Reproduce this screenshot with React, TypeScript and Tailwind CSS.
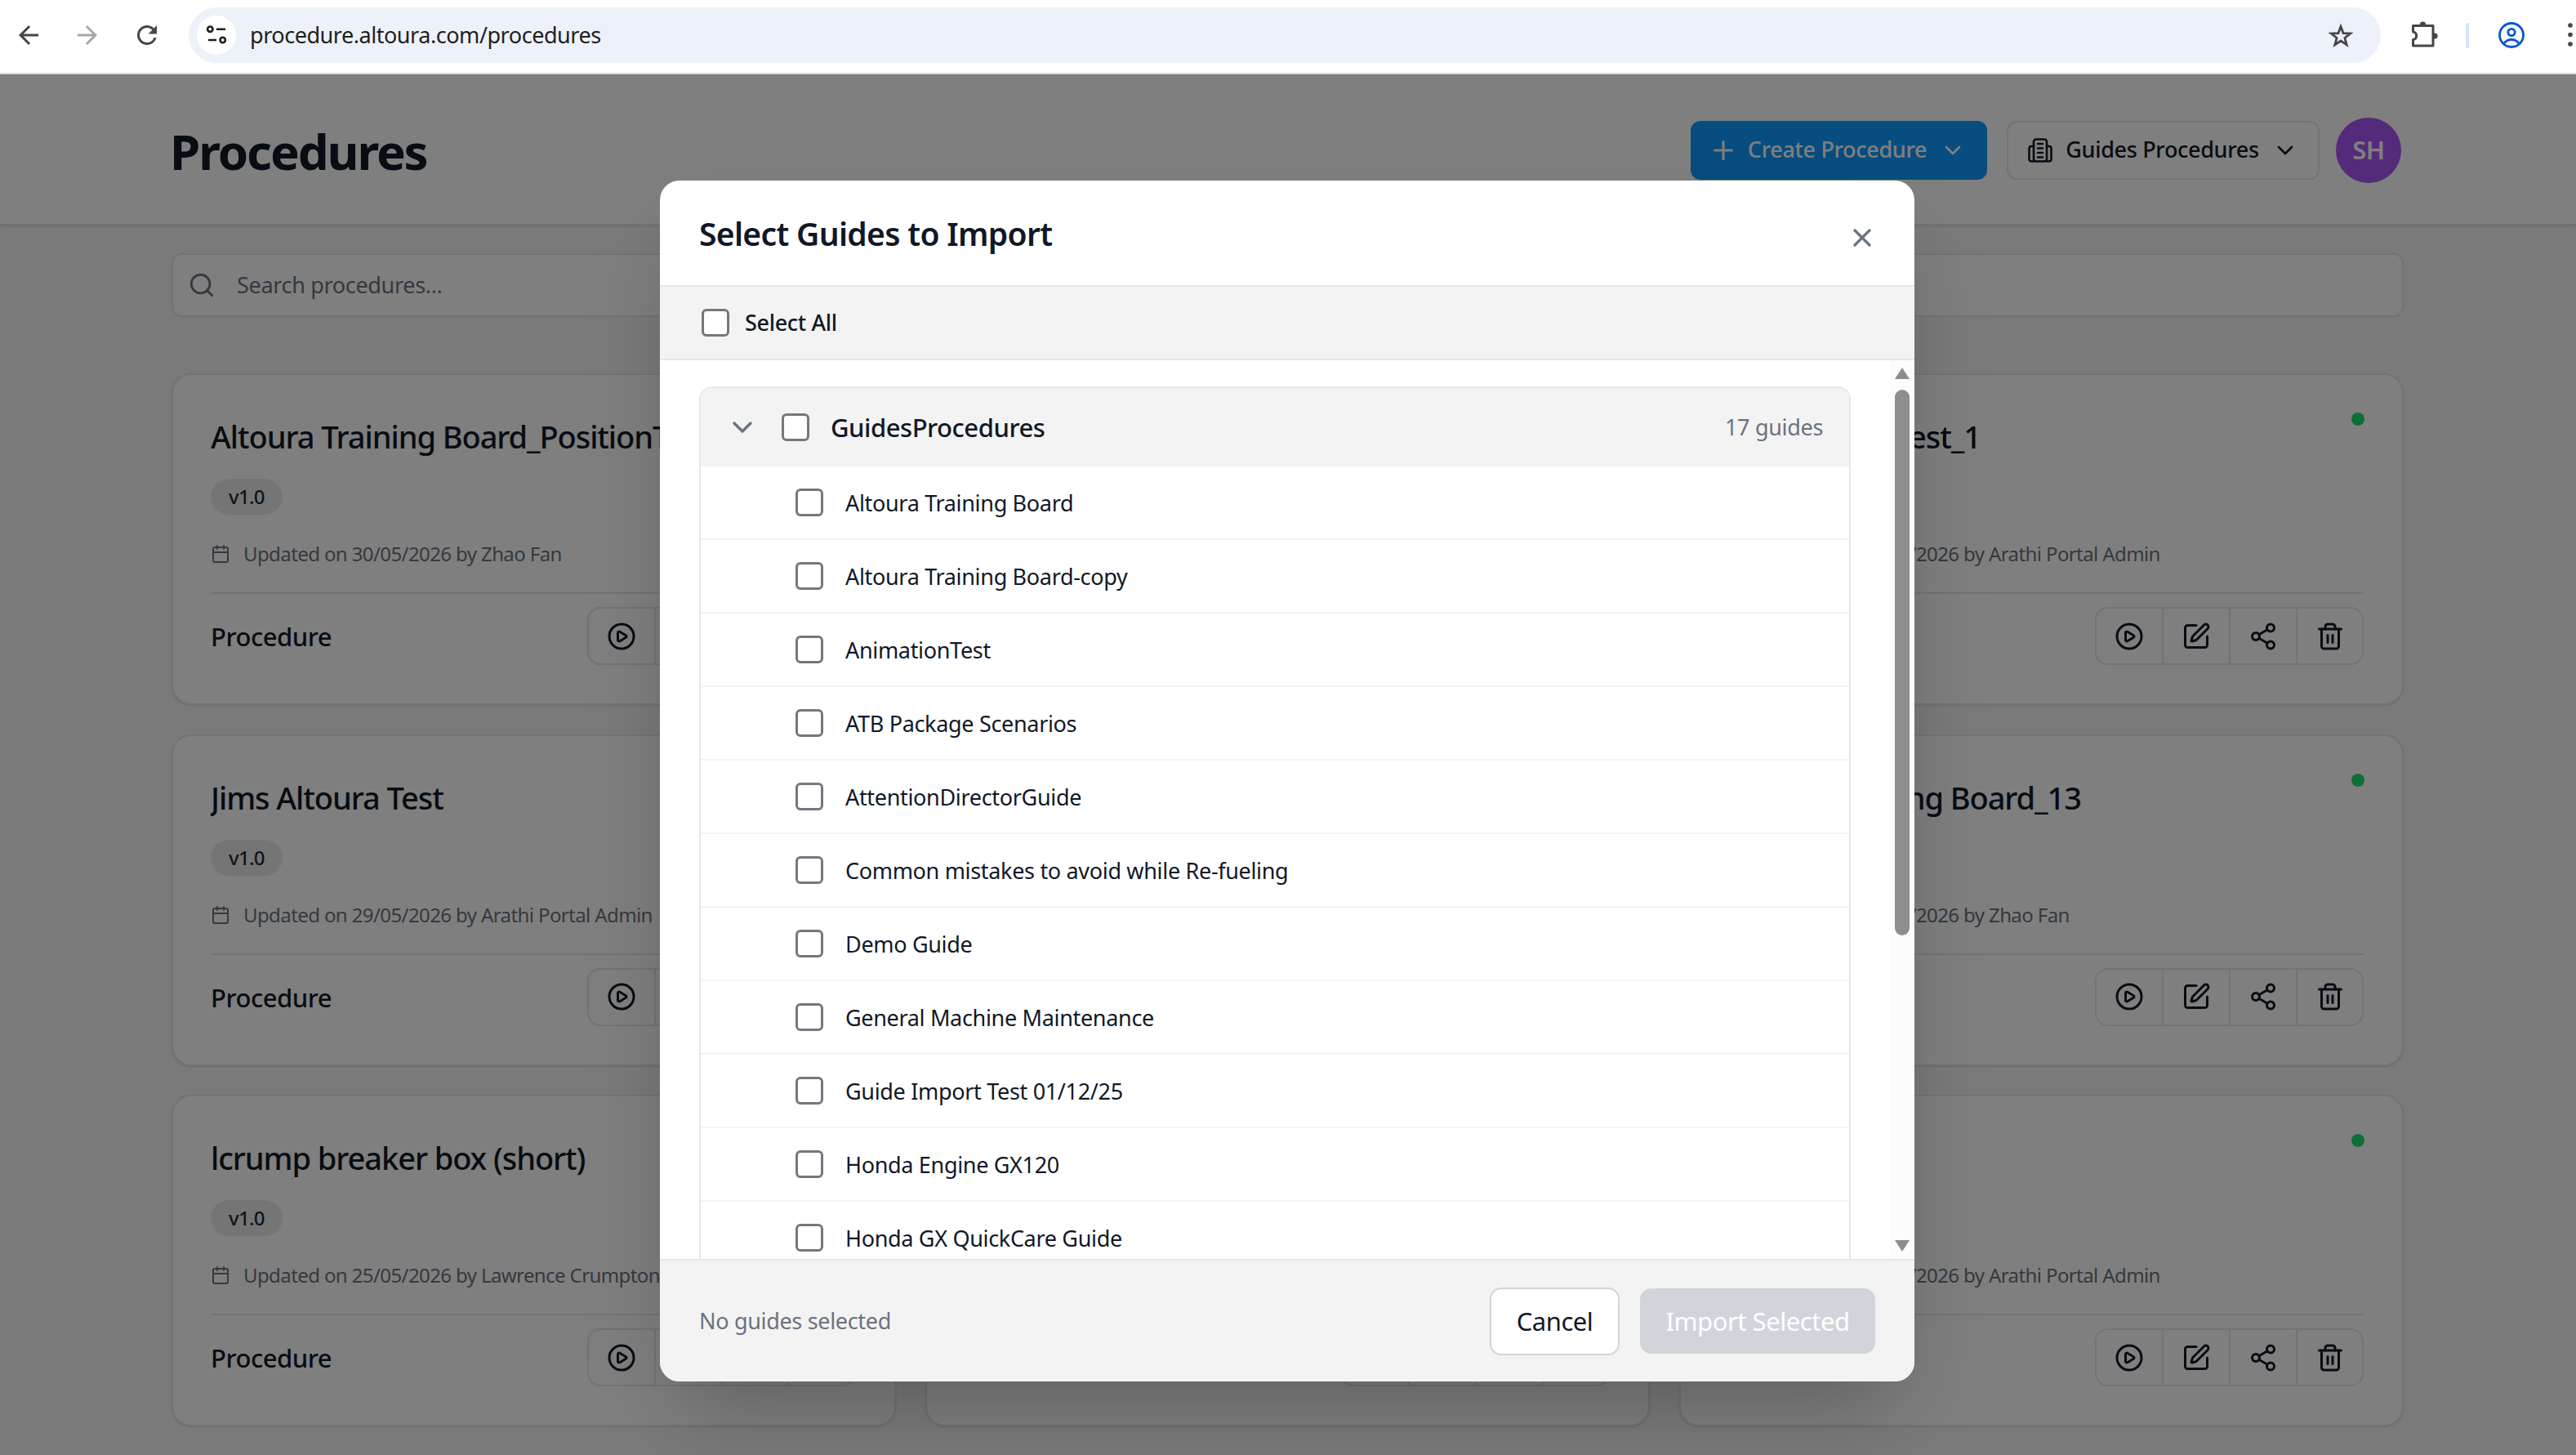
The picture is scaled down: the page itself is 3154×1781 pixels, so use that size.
import { ChevronDown, CirclePlay, SquarePen, Share2, Trash2, Search, Plus, X, Calendar } from "lucide-react";

const guides = [
  "Altoura Training Board",
  "Altoura Training Board-copy",
  "AnimationTest",
  "ATB Package Scenarios",
  "AttentionDirectorGuide",
  "Common mistakes to avoid while Re-fueling",
  "Demo Guide",
  "General Machine Maintenance",
  "Guide Import Test 01/12/25",
  "Honda Engine GX120",
  "Honda GX QuickCare Guide",
];

// middle column sits fully behind the dialog, so only its frame matters
const cards = [
  { title: "Altoura Training Board_PositionTest", meta: "Updated on 30/05/2026 by Zhao Fan" },
  { title: "", meta: "" },
  { title: "Jims Altoura Test_1", meta: "Updated on 29/05/2026 by Arathi Portal Admin" },
  { title: "Jims Altoura Test", meta: "Updated on 29/05/2026 by Arathi Portal Admin" },
  { title: "", meta: "" },
  { title: "Altoura Training Board_13", meta: "Updated on 29/05/2026 by Zhao Fan" },
  { title: "lcrump breaker box (short)", meta: "Updated on 25/05/2026 by Lawrence Crumpton" },
  { title: "", meta: "" },
  { title: "", meta: "Updated on 25/05/2026 by Arathi Portal Admin" },
];

function Check() {
  return <span className="w-[34px] h-[34px] shrink-0 rounded-[6px] border-[3px] border-[#767680] bg-white" />;
}

function Card({ title, meta }: { title: string; meta: string }) {
  return (
    <div className="relative h-[406px] rounded-[24px] border-2 border-[#e5e7eb] bg-white pl-[46px] pr-[47px] pt-[46px] shadow-sm">
      <span className="absolute right-[46px] top-[46px] w-4 h-4 rounded-full bg-[#1edc70]" />
      <div className="h-[64px] pr-[60px] text-[38px] leading-[58px] font-medium text-[#111827] whitespace-nowrap overflow-hidden tracking-[-0.028em]">{title}</div>
      <div className="mt-[17px] flex">
        <span className="h-[44px] px-[22px] rounded-full bg-[#ebebeb] text-[24px] leading-[44px] font-medium text-[#1f2937] tracking-[-0.03em]">v1.0</span>
      </div>
      <div className="mt-[24px] h-[48px] flex items-center gap-[16px] text-[24px] text-[#6b7280] tracking-[-0.025em] whitespace-nowrap">
        <Calendar size={24} strokeWidth={2} className="shrink-0" />
        {meta}
      </div>
      <div className="mt-[23px] border-t-2 border-[#e5e7eb] pt-[16px] flex items-center justify-between">
        <span className="mt-[2px] text-[31px] font-medium text-[#111827] tracking-[-0.015em]">Procedure</span>
        <div className="flex h-[71px] rounded-[16px] border-2 border-[#e5e7eb] overflow-hidden text-[#111827]">
          {[CirclePlay, SquarePen, Share2, Trash2].map((Icon, i) => (
            <span key={i} className={`flex items-center justify-center ${i < 3 ? "w-[82px] border-r-2 border-[#e5e7eb]" : "w-[79px]"}`}>
              <Icon size={36} strokeWidth={2} />
            </span>
          ))}
        </div>
      </div>
    </div>
  );
}

export default function App() {
  return (
    <div className="relative h-[1781px] w-[3154px] overflow-hidden flex flex-col bg-white [font-family:'Noto_Sans',sans-serif]">
      {/* browser toolbar */}
      <div className="h-[91px] shrink-0 border-b-2 border-[#dcdcdc] flex items-center pl-[17px] pb-[3px] text-[#444746]">
        <svg width="36" height="36" viewBox="0 0 24 24" fill="currentColor" className="shrink-0"><path d="M20 11H7.83l5.59-5.59L12 4l-8 8 8 8 1.41-1.41L7.83 13H20v-2z" /></svg>
        <svg width="36" height="36" viewBox="0 0 24 24" fill="#a8a8a8" className="shrink-0 ml-[35.5px]"><path d="M4 11h12.17l-5.59-5.59L12 4l8 8-8 8-1.41-1.41L16.17 13H4v-2z" /></svg>
        <svg width="36" height="36" viewBox="0 0 24 24" fill="currentColor" className="shrink-0 ml-[37px]"><path d="M17.65 6.35A7.958 7.958 0 0 0 12 4c-4.42 0-7.99 3.58-7.99 8s3.57 8 7.99 8c3.73 0 6.84-2.55 7.73-6h-2.08A5.99 5.99 0 0 1 12 18c-3.31 0-6-2.69-6-6s2.69-6 6-6c1.66 0 3.14.69 4.22 1.78L13 11h7V4l-2.35 2.35z" /></svg>
        <div className="shrink-0 ml-[33.5px] h-[68px] w-[2684px] rounded-full bg-[#edf2fa] flex items-center pl-[10px] pr-[34px]">
          <span className="w-[48px] h-[48px] rounded-full bg-white flex items-center justify-center">
            <svg width="28" height="28" viewBox="0 0 28 28" fill="none" stroke="#1f1f1f" strokeWidth="2.6">
              <circle cx="6.3" cy="6.7" r="3.2" />
              <path d="M14 6.7h11M4 20h10" />
              <circle cx="21.7" cy="20" r="3.2" />
            </svg>
          </span>
          <span className="ml-[17px] text-[27px] text-[#1f1f1f] tracking-[-0.017em]">procedure.altoura.com/procedures</span>
          <svg width="30" height="30" viewBox="0 0 30 30" fill="none" stroke="currentColor" strokeWidth="2.8" strokeLinejoin="miter" className="ml-auto">
            <path d="M15 4.5 18 12.6 26.7 13 19.9 18.4 22.2 26.8 15 22 7.8 26.8 10.1 18.4 3.3 13 12 12.6Z" />
          </svg>
        </div>
        <svg width="36" height="36" viewBox="0 0 36 36" className="shrink-0 ml-[36px]">
          <circle cx="15.5" cy="5" r="3.6" fill="currentColor" />
          <circle cx="30" cy="19" r="3.6" fill="currentColor" />
          <path d="M3.5 6.5H28V31H3.5V23.5A4.8 4.8 0 0 0 3.5 14Z" fill="white" stroke="currentColor" strokeWidth="3" strokeLinejoin="round" />
        </svg>
        <span className="shrink-0 ml-[32px] h-[31px] w-[4px] rounded-full bg-[#d3e3fd]" />
        <svg width="32" height="32" viewBox="0 0 32 32" fill="none" stroke="#0b57d0" strokeWidth="2.8" className="shrink-0 ml-[36px]">
          <circle cx="16" cy="16" r="14.5" />
          <circle cx="16" cy="12.5" r="4.2" />
          <path d="M6.5 26.5c2.5-3.5 5.8-5 9.5-5s7 1.5 9.5 5" />
        </svg>
        <svg width="8" height="30" viewBox="0 0 8 30" fill="currentColor" className="shrink-0 ml-[52px]">
          <circle cx="4" cy="3" r="2.8" />
          <circle cx="4" cy="14.5" r="2.8" />
          <circle cx="4" cy="26" r="2.8" />
        </svg>
      </div>

      {/* page underneath */}
      <div className="relative flex-1 flex flex-col bg-[#f5f5f5]">
        <div className="h-[185px] shrink-0 bg-white border-b-2 border-[#e5e7eb] shadow-sm flex items-center justify-between pl-[210px] pr-[214px]">
          <h1 className="-ml-[2px] mt-[5px] text-[60px] font-bold text-[#111827] tracking-[-0.035em]">Procedures</h1>
          <div className="flex items-center pt-[2px]">
            <button className="w-[363px] h-[72px] rounded-[12px] bg-[#0e9aff] text-white flex items-center justify-center gap-[12px] pr-[4px] text-[27px] font-medium tracking-[-0.012em]">
              <Plus size={36} strokeWidth={2} />
              Create Procedure
              <ChevronDown size={32} strokeWidth={2} className="ml-[4px]" />
            </button>
            <button className="ml-[24px] w-[383px] h-[72px] rounded-[12px] border-2 border-[#e5e7eb] bg-white text-[#111827] flex items-center justify-center gap-[16px] text-[27px] font-medium tracking-[-0.012em]">
              <svg width="30" height="30" viewBox="0 0 30 30" fill="none" stroke="currentColor" strokeWidth="2.6" strokeLinecap="round" strokeLinejoin="round" className="shrink-0">
                <rect x="7" y="1.5" width="16" height="27" rx="3" />
                <path d="M7 10H4a2.5 2.5 0 0 0-2.5 2.5V26A2.5 2.5 0 0 0 4 28.5H7M23 10h3a2.5 2.5 0 0 1 2.5 2.5V26a2.5 2.5 0 0 1-2.5 2.5H23M12 7h6M12 12.5h6M12 18h6M12 23.5h6" />
              </svg>
              Guides Procedures
              <ChevronDown size={32} strokeWidth={2} />
            </button>
            <span className="ml-[20px] w-[80px] h-[80px] rounded-full bg-[#a855f7] text-white flex items-center justify-center text-[31px] font-semibold tracking-[-0.015em]">SH</span>
          </div>
        </div>

        <div className="pt-[34px] pl-[210px] pr-[211px]">
          <div className="h-[78px] rounded-[12px] border-2 border-[#e5e7eb] bg-white flex items-center pl-[18px] gap-[26px] text-[27px] text-[#6b7280] tracking-[-0.012em]">
            <Search size={34} strokeWidth={2} />
            Search procedures...
          </div>
          <div className="mt-[69px] grid grid-cols-3 gap-x-[36px] gap-y-[35.5px]">
            {cards.map((c, i) => (
              <Card key={i} title={c.title} meta={c.meta} />
            ))}
          </div>
        </div>

        {/* dimmer + dialog */}
        <div className="absolute inset-0 bg-black/50 flex justify-center items-start pt-[130px] pr-[2px]">
          <div className="w-[1536px] h-[1470px] rounded-[24px] bg-white overflow-hidden flex flex-col shadow-[0_50px_100px_-24px_rgba(0,0,0,0.25)]">
            <div className="h-[130px] shrink-0 border-b-2 border-[#e5e7eb] flex items-center justify-between pl-[48px] pr-[46px]">
              <h2 className="mt-[2px] text-[39px] font-semibold text-[#111827] tracking-[-0.017em]">Select Guides to Import</h2>
              <X size={36} strokeWidth={2.2} className="text-[#6b7280] mt-[12px]" />
            </div>
            <div className="h-[90px] shrink-0 bg-[#f3f3f3] border-b-2 border-[#e5e7eb] flex items-center gap-[19px] pl-[51px] text-[27px] font-medium text-[#111827] tracking-[-0.012em]">
              <Check />
              <span className="mt-[1px]">Select All</span>
            </div>
            <div className="flex-1 min-h-0 flex overflow-hidden">
              <div className="flex-1 min-w-0 pt-[32px] pl-[48px] pr-[48px]">
                <div className="rounded-t-[16px] border-x-2 border-t-2 border-[#e5e7eb]">
                  <div className="h-[96px] rounded-t-[14px] bg-[#f3f3f3] flex items-center pl-[31px] pr-[32px]">
                    <ChevronDown size={40} strokeWidth={2} className="text-[#6b7280]" />
                    <span className="ml-[28px] flex"><Check /></span>
                    <span className="ml-[26px] text-[31px] font-medium text-[#111827] tracking-[-0.015em]">GuidesProcedures</span>
                    <span className="ml-auto text-[27px] text-[#6b7280] tracking-[-0.012em]">17 guides</span>
                  </div>
                  {guides.map((g) => (
                    <div key={g} className="h-[90px] shrink-0 border-b-2 border-[#f3f4f6] flex items-center pl-[116px] gap-[27px] text-[27px] text-[#111827] tracking-[-0.012em]">
                      <Check />
                      <span className="mt-[2px]">{g}</span>
                    </div>
                  ))}
                </div>
              </div>
              <div className="w-[30px] shrink-0 bg-[#fcfcfc] flex flex-col items-center pt-[9px] pb-[9px]">
                <svg width="18" height="14" viewBox="0 0 18 14" fill="#8c8c8c"><path d="M9 0 18 14H0Z" /></svg>
                <div className="mt-[13px] w-[18px] h-[668px] rounded-full bg-[#8e8e8e]" />
                <svg width="18" height="14" viewBox="0 0 18 14" fill="#8c8c8c" className="mt-auto"><path d="M0 0H18L9 14Z" /></svg>
              </div>
            </div>
            <div className="h-[150px] shrink-0 bg-[#f3f3f3] border-t-2 border-[#e5e7eb] flex items-center pl-[48px] pr-[48px]">
              <span className="text-[27px] text-[#6b7280] tracking-[-0.012em]">No guides selected</span>
              <button className="ml-auto w-[159px] h-[83px] rounded-[14px] border-2 border-[#d1d5db] bg-white text-[31px] text-[#111827] tracking-[-0.015em]">Cancel</button>
              <button className="ml-[25px] w-[288px] h-[80px] rounded-[14px] bg-[#d1d5db] text-[31px] text-white tracking-[-0.015em]">Import Selected</button>
            </div>
          </div>
        </div>
      </div>
    </div>
  );
}
